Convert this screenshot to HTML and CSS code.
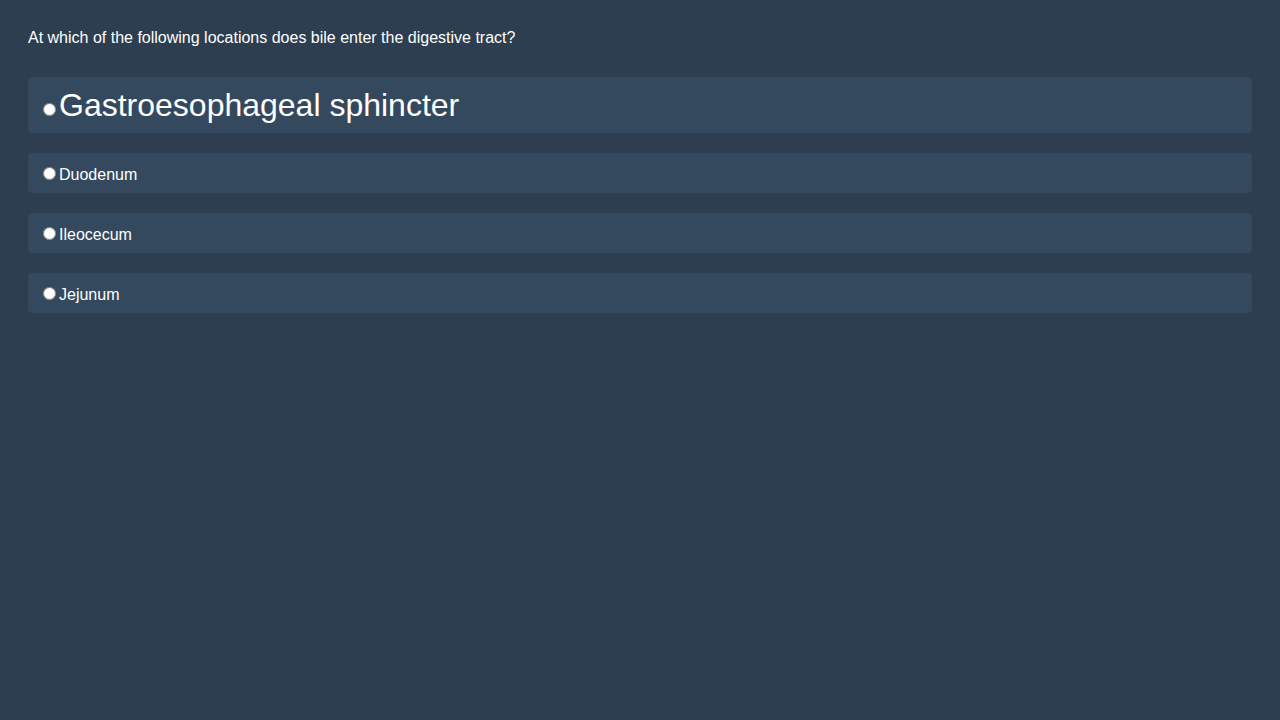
FILE: index.html
```html
<!DOCTYPE html>
<html>
<head>
<meta charset="utf-8">
<link rel="stylesheet" href="styles.css">
</head>
<body>
<div class="quiz">
  <p class="question">At which of the following locations does bile enter the digestive tract?</p>
  <div class="options">
    <label class="option big"><input type="radio" name="q">Gastroesophageal sphincter</label>
    <label class="option"><input type="radio" name="q">Duodenum</label>
    <label class="option"><input type="radio" name="q">Ileocecum</label>
    <label class="option"><input type="radio" name="q">Jejunum</label>
  </div>
</div>
</body>
</html>
```
FILE: styles.css
```css
html, body {
  margin: 0;
  background: #2c3e50;
}
body {
  font-family: "Liberation Sans", Arial, sans-serif;
  font-size: 16px;
  color: #ffffff;
}
.quiz {
  padding: 29px 28px 28px;
}
.question {
  margin: 0 0 30px;
}
.options {
  display: flex;
  flex-direction: column;
  gap: 20px;
}
.option {
  display: block;
  background: #34495e;
  border-radius: 4px;
  padding: 11px 10px 9px;
  height: 20px;
}
.option.big {
  font-size: 32px;
  padding: 10px;
  height: 36px;
  line-height: 36px;
}
```
